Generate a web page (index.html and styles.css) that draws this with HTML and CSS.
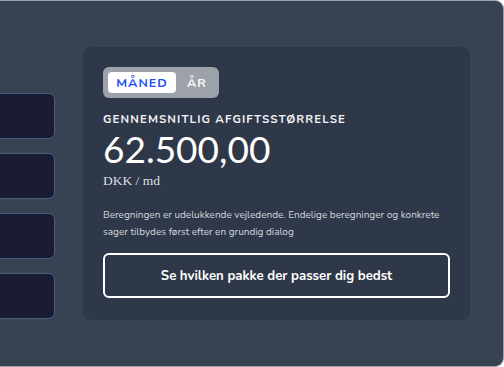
FILE: index.html
```html
<!DOCTYPE html>
<html lang="da">
<head>
<meta charset="utf-8"/>
<meta content="width=device-width, initial-scale=1.0" name="viewport"/>
<title>Beregner</title>
<link rel="stylesheet" href="styles.css">
</head>
<body>
<div class="panel">
  <div class="options">
    <div class="option"></div>
    <div class="option"></div>
    <div class="option"></div>
    <div class="option"></div>
  </div>
  <div class="result">
    <div class="toggle">
      <span class="toggle-btn active">MÅNED</span>
      <span class="toggle-btn">ÅR</span>
    </div>
    <h2 class="result-label">GENNEMSNITLIG AFGIFTSSTØRRELSE</h2>
    <div class="result-amount">62.500,00</div>
    <div class="result-unit">DKK / md</div>
    <p class="result-note">Beregningen er udelukkende vejledende. Endelige beregninger og konkrete sager tilbydes først efter en grundig dialog</p>
    <button class="btn-outline">Se hvilken pakke der passer dig bedst</button>
  </div>
</div>
</body>
</html>
```

FILE: styles.css
```css
* {
  margin: 0;
  padding: 0;
  box-sizing: border-box;
}
body {
  font-family: 'Nunito', 'Lato', 'Noto Sans', sans-serif;
  background: #ffffff;
  width: 504px;
  height: 367px;
  overflow: hidden;
}
.panel {
  width: 504px;
  height: 367px;
  background: #374253;
  border: 1px solid #9aa1ad;
  border-left: none;
  border-radius: 0 9px 9px 0;
  display: flex;
  align-items: flex-start;
  gap: 28px;
  padding-top: 46px;
}
.options {
  width: 55px;
  display: flex;
  flex-direction: column;
  gap: 14px;
  padding-top: 46px;
}
.option {
  height: 46px;
  background: #1b1c33;
  border: 1px solid #4c5b80;
  border-left: none;
  border-radius: 0 6px 6px 0;
}
.result {
  width: 387px;
  height: 273px;
  background: #2f3848;
  border-radius: 8px;
  padding: 20px 20px 0;
  color: #ffffff;
}
.toggle {
  display: flex;
  align-items: center;
  width: 116px;
  height: 31px;
  padding: 5px;
  background: #9da1a9;
  border-radius: 6px;
}
.toggle-btn {
  flex-shrink: 0;
  font-size: 12.5px;
  font-weight: 700;
  letter-spacing: 1px;
  color: #f7f8fa;
  padding-left: 11px;
  line-height: 21px;
}
.toggle-btn.active {
  width: 68px;
  background: #ffffff;
  color: #1c4ff2;
  border-radius: 4px;
  text-align: center;
  padding: 0;
}
.result-label {
  margin-top: 14px;
  font-size: 11.5px;
  font-weight: 700;
  letter-spacing: 1.1px;
  line-height: 15px;
  color: #f2f3f5;
}
.result-amount {
  margin-top: 4px;
  font-family: 'Lato', sans-serif;
  font-size: 37px;
  line-height: 36px;
  color: #ffffff;
}
.result-unit {
  margin-top: 6px;
  font-family: 'Liberation Serif', serif;
  font-size: 13.5px;
  color: #dcdfe4;
  line-height: 16px;
}
.result-note {
  margin-top: 18px;
  font-size: 10px;
  line-height: 17px;
  color: #d3d7de;
}
.btn-outline {
  display: block;
  width: 347px;
  height: 45px;
  margin-top: 12px;
  background: transparent;
  border: 2px solid #ffffff;
  border-radius: 6px;
  color: #ffffff;
  font-family: inherit;
  font-size: 13.2px;
  font-weight: 700;
}
```
